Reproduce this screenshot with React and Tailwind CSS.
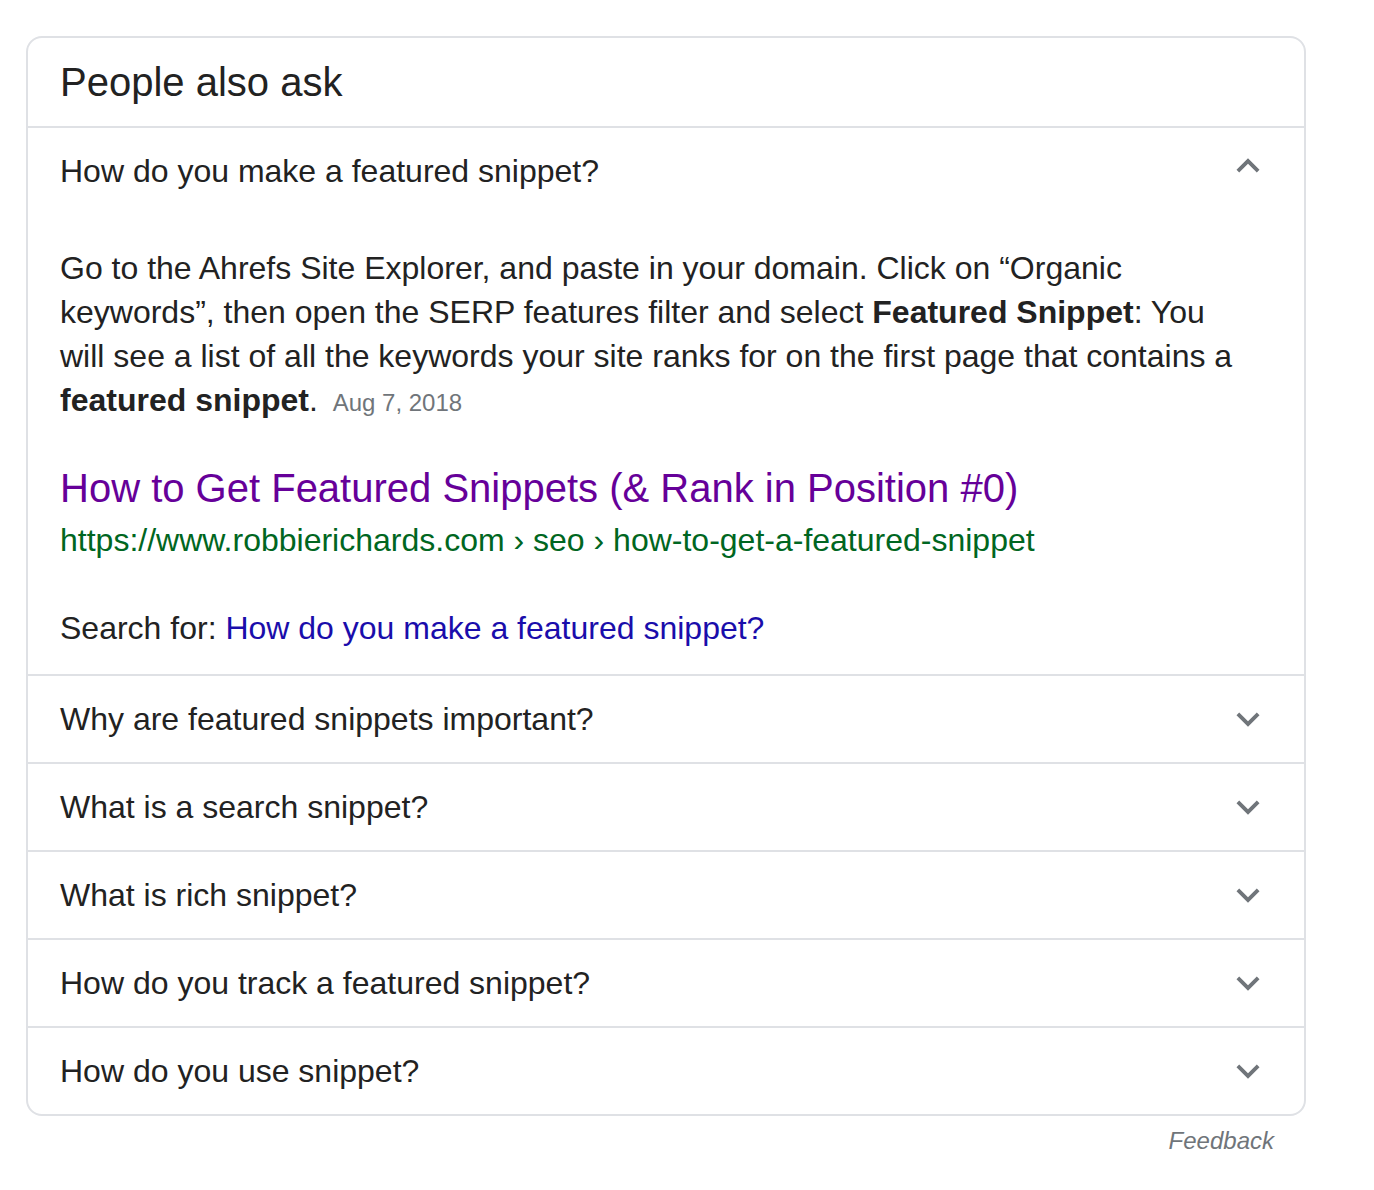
import React from "react";

function ChevronDown({ className = "" }) {
  return (
    <svg viewBox="0 0 24 24" width="46" height="46" className={className} fill="#70757a">
      <path d="M16.59 8.59L12 13.17 7.41 8.59 6 10l6 6 6-6z" />
    </svg>
  );
}

function ChevronUp({ className = "" }) {
  return (
    <svg viewBox="0 0 24 24" width="46" height="46" className={className} fill="#70757a">
      <path d="M12 8l-6 6 1.41 1.41L12 10.83l4.59 4.58L18 14z" />
    </svg>
  );
}

const questions = [
  "Why are featured snippets important?",
  "What is a search snippet?",
  "What is rich snippet?",
  "How do you track a featured snippet?",
  "How do you use snippet?",
];

export default function App() {
  return (
    <div
      className="min-h-[1190px] bg-white pt-[36px] pl-[26px]"
      style={{ fontFamily: '"Liberation Sans", Arial, Helvetica, sans-serif' }}
    >
      <div className="w-[1280px]">
        <div className="rounded-[16px] border-2 border-[#dfe1e5] overflow-hidden">
          <div className="h-[88px] flex items-center px-[32px] text-[40px] leading-[52px] text-[#222]">
            People also ask
          </div>

          <div className="border-t-2 border-[#dfe1e5]">
            <div className="h-[86px] flex items-center justify-between px-[32px]">
              <span className="text-[32px] leading-[44px] text-[#222]">
                How do you make a featured snippet?
              </span>
              <ChevronUp className="mb-[10px] mr-[1px] shrink-0" />
            </div>
            <div className="px-[32px] pt-[32px] pb-[24px]">
              <p className="max-w-[1190px] text-[32px] leading-[44px] text-[#222]">
                Go to the Ahrefs Site Explorer, and paste in your domain. Click on “Organic
                keywords”, then open the SERP features filter and select{" "}
                <b className="font-bold">Featured Snippet</b>: You will see a list of all the
                keywords your site ranks for on the first page that contains a{" "}
                <b className="font-bold">featured snippet</b>.{" "}
                <span className="ml-[6px] text-[24px] text-[#70757a]">Aug 7, 2018</span>
              </p>
              <div className="mt-[37px]">
                <div className="text-[40px] leading-[52px] text-[#660099]">
                  How to Get Featured Snippets (&amp; Rank in Position #0)
                </div>
                <div className="text-[32px] leading-[52px] text-[#006621]">
                  https://www.robbierichards.com › seo › how-to-get-a-featured-snippet
                </div>
              </div>
              <div className="mt-[40px] text-[32px] leading-[44px] text-[#222]">
                Search for: <span className="text-[#1a0dab]">How do you make a featured snippet?</span>
              </div>
            </div>
          </div>

          {questions.map((q) => (
            <div
              key={q}
              className="border-t-2 border-[#dfe1e5] h-[88px] flex items-center justify-between px-[32px]"
            >
              <span className="text-[32px] leading-[44px] text-[#222]">{q}</span>
              <ChevronDown className="mr-[1px] shrink-0" />
            </div>
          ))}
        </div>
        <div className="flex justify-end pr-[32px] mt-[9px]">
          <span className="italic text-[24px] leading-[32px] text-[#70757a]">Feedback</span>
        </div>
      </div>
    </div>
  );
}
